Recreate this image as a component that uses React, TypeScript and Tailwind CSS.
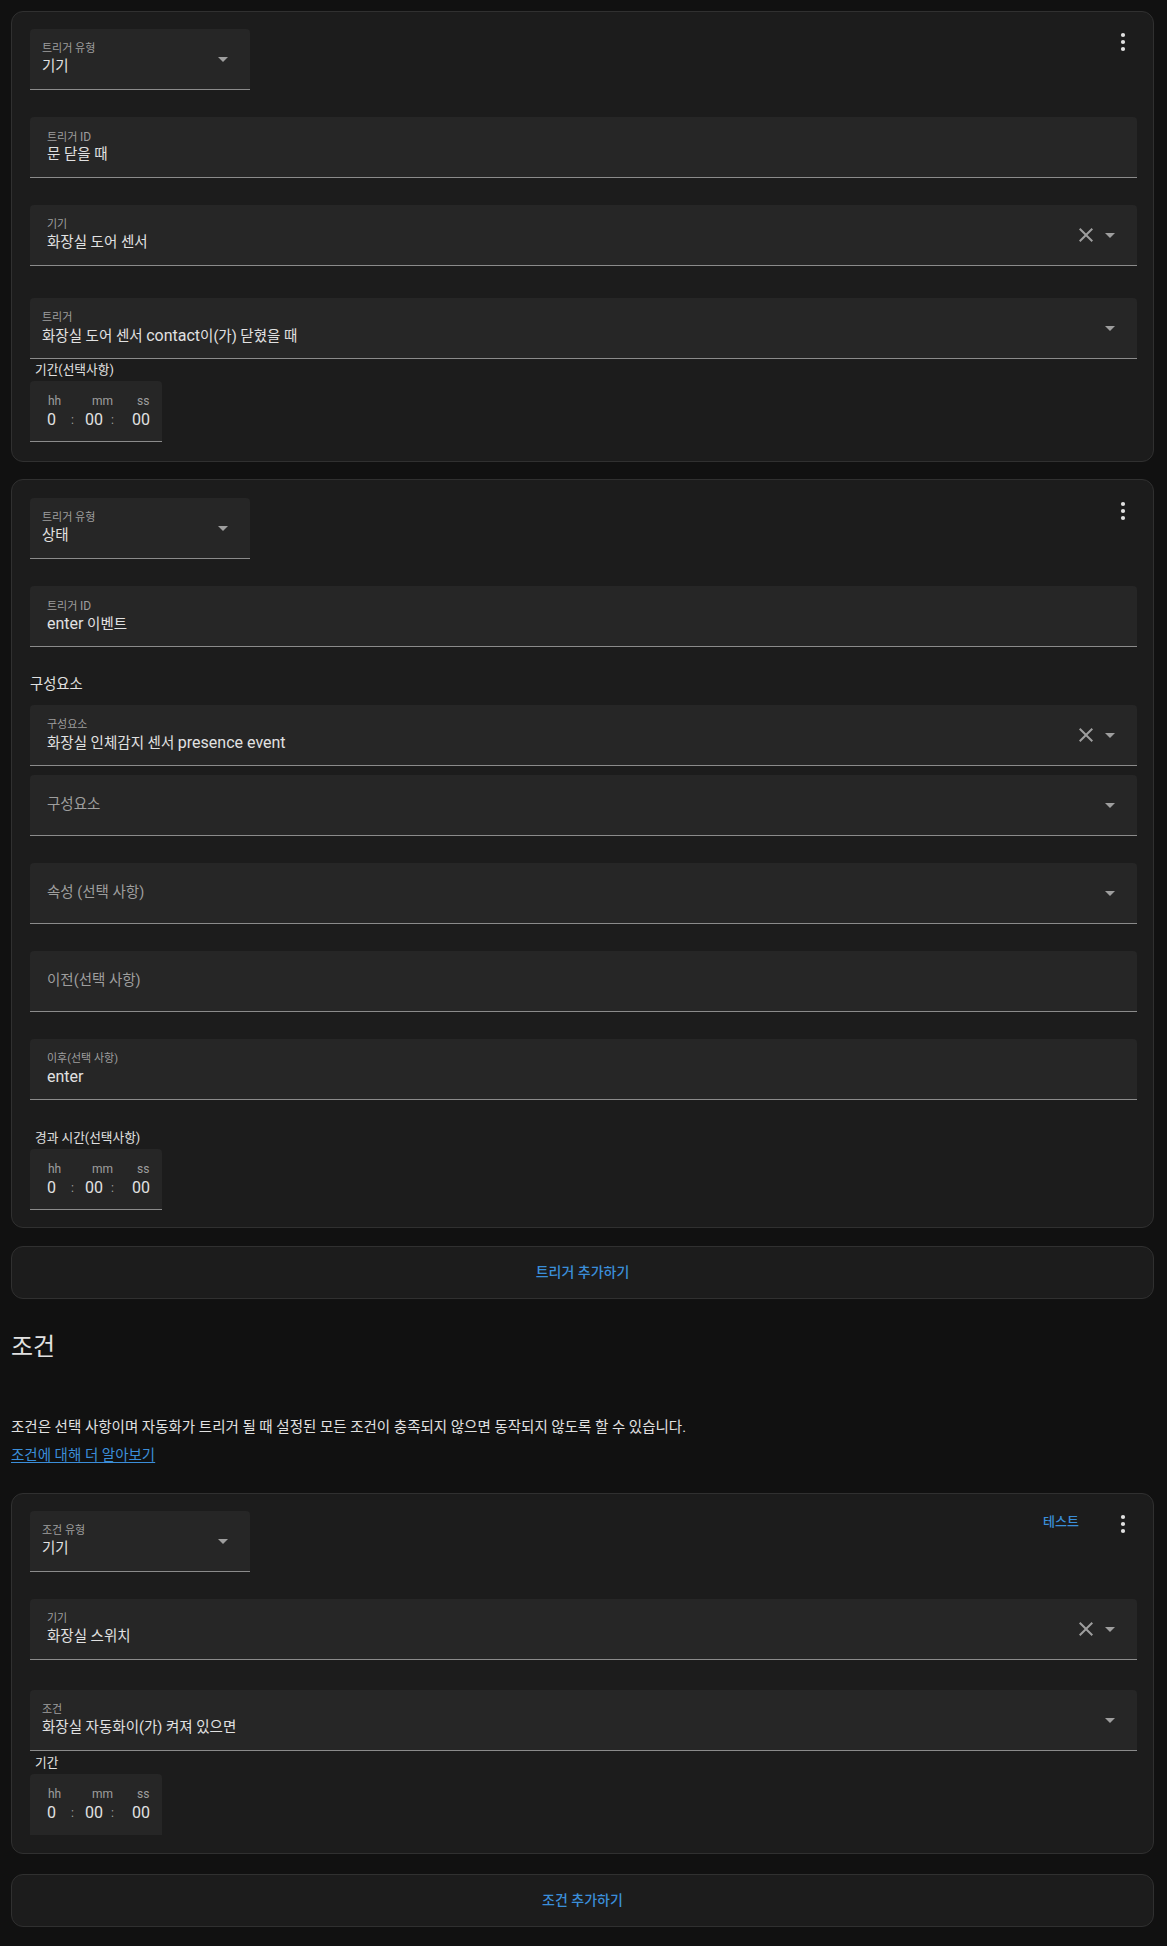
import React from 'react';

const font = "font-[Roboto,'Noto_Sans_CJK_KR',sans-serif]";

// Korean glyphs run wider than the original font, so Korean runs are set a bit smaller
// and Latin words get their nominal size back through these spans
const L12 = ({ children }: { children: React.ReactNode }) => <span className="text-[12px]">{children}</span>;
const L16 = ({ children }: { children: React.ReactNode }) => <span className="text-[16px]">{children}</span>;

const Arrow = () => (
  <svg width="24" height="24" viewBox="0 0 24 24" className="shrink-0">
    <path d="M7,10L12,15L17,10H7Z" fill="#9e9e9e" />
  </svg>
);

const Close = () => (
  <svg width="24" height="24" viewBox="0 0 24 24" className="shrink-0">
    <path
      d="M19,6.41L17.59,5L12,10.59L6.41,5L5,6.41L10.59,12L5,17.59L6.41,19L12,13.41L17.59,19L19,17.59L13.41,12L19,6.41Z"
      fill="#9e9e9e"
    />
  </svg>
);

const Dots = () => (
  <svg width="24" height="24" viewBox="0 0 24 24" className="shrink-0 mt-px mr-[2px]">
    <circle cx="12" cy="5" r="2.1" fill="#e1e1e1" />
    <circle cx="12" cy="12" r="2.1" fill="#e1e1e1" />
    <circle cx="12" cy="19" r="2.1" fill="#e1e1e1" />
  </svg>
);

// filled field with floating label + value
const Field = ({
  label,
  value,
  select,
  clear,
  arrow,
  className = '',
}: {
  label: React.ReactNode;
  value: React.ReactNode;
  select?: boolean;
  clear?: boolean;
  arrow?: boolean;
  className?: string;
}) => (
  <div
    className={`h-[61px] bg-[#262626] rounded-t-[4px] border-b border-[#8b8b8b] flex items-center pr-[15px] ${
      select ? 'pl-[12px]' : 'pl-[17px]'
    } ${className}`}
  >
    <div className="flex-1 min-w-0 self-start pt-[10px]">
      <div className="text-[11px] h-[20px] leading-[20px] text-[#9e9e9e]">{label}</div>
      <div className="text-[14.5px] h-[16px] leading-[16px] text-[#e1e1e1] whitespace-nowrap">{value}</div>
    </div>
    {clear && <Close />}
    {arrow && <Arrow />}
  </div>
);

const Placeholder = ({ text, arrow, className = '' }: { text: string; arrow?: boolean; className?: string }) => (
  <div
    className={`h-[61px] bg-[#262626] rounded-t-[4px] border-b border-[#8b8b8b] flex items-center pl-[17px] pr-[15px] ${className}`}
  >
    <div className="flex-1 text-[14.5px] text-[#9e9e9e]">{text}</div>
    {arrow && <Arrow />}
  </div>
);

const Duration = ({ label, underline = true }: { label: string; underline?: boolean }) => (
  <>
    <div className="h-[22px] leading-[22px] pl-[5px] text-[12.7px] text-[#e1e1e1]">{label}</div>
    <div
      className={`w-[132px] h-[61px] bg-[#262626] rounded-t-[4px] pt-[12px] ${
        underline ? 'border-b border-[#8b8b8b]' : ''
      }`}
    >
      <div className="flex text-[12px] leading-[16px] text-[#9e9e9e]">
        <span className="ml-[18px] w-[13px]">hh</span>
        <span className="ml-[31px] w-[20px]">mm</span>
        <span className="ml-[25px]">ss</span>
      </div>
      <div className="flex mt-px text-[16px] leading-[20px] text-[#e1e1e1]">
        <span className="ml-[17px] w-[23px]">0</span>
        <span className="w-[5px] text-center text-[12px] text-[#9e9e9e]">:</span>
        <span className="ml-[10px] w-[18px]">00</span>
        <span className="ml-[7px] w-[5px] text-center text-[12px] text-[#9e9e9e]">:</span>
        <span className="ml-[17px]">00</span>
      </div>
    </div>
  </>
);

const Card = ({ children, className = '' }: { children: React.ReactNode; className?: string }) => (
  <div className={`bg-[#1c1c1c] border border-[#303030] rounded-[12px] pl-[18px] pr-[16px] ${className}`}>
    {children}
  </div>
);

const AddButton = ({ text, className = '' }: { text: string; className?: string }) => (
  <div
    className={`h-[53px] bg-[#1c1c1c] border border-[#303030] rounded-[12px] flex items-center justify-center text-[14px] font-medium text-[#3b8ed9] ${className}`}
  >
    {text}
  </div>
);

export default function App() {
  return (
    <div className={`min-h-[1946px] bg-[#111111] pl-[11px] pr-[13px] pt-[11px] pb-[19px] ${font}`}>
      {/* trigger: device */}
      <Card className="pt-[17px] pb-[19px]">
        <div className="flex justify-between items-start">
          <Field label="트리거 유형" value="기기" select arrow className="w-[220px]" />
          <Dots />
        </div>
        <Field label={<>트리거 <L12>ID</L12></>} value="문 닫을 때" className="mt-[27px]" />
        <Field label="기기" value="화장실 도어 센서" clear arrow className="mt-[27px]" />
        <Field
          label="트리거"
          value={<>화장실 도어 센서 <L16>contact</L16>이(가) 닫혔을 때</>}
          select
          arrow
          className="mt-[32px]"
        />
        <Duration label="기간(선택사항)" />
      </Card>

      {/* trigger: state */}
      <Card className="mt-[17px] pt-[18px] pb-[17px]">
        <div className="flex justify-between items-start">
          <Field label="트리거 유형" value="상태" select arrow className="w-[220px]" />
          <Dots />
        </div>
        <Field label={<>트리거 <L12>ID</L12></>} value={<><L16>enter</L16> 이벤트</>} className="mt-[27px]" />
        <div className="mt-[27px] h-[20px] leading-[20px] text-[14.3px] text-[#e1e1e1]">구성요소</div>
        <Field
          label="구성요소"
          value={<>화장실 인체감지 센서 <L16>presence event</L16></>}
          clear
          arrow
          className="mt-[11px]"
        />
        <Placeholder text="구성요소" arrow className="mt-[9px]" />
        <Placeholder text="속성 (선택 사항)" arrow className="mt-[27px]" />
        <Placeholder text="이전(선택 사항)" className="mt-[27px]" />
        <Field label="이후(선택 사항)" value={<L16>enter</L16>} className="mt-[27px]" />
        <div className="mt-[27px]">
          <Duration label="경과 시간(선택사항)" />
        </div>
      </Card>

      <AddButton text="트리거 추가하기" className="mt-[18px]" />

      {/* conditions */}
      <h2 className="mt-[32px] text-[24px] leading-[32px] font-normal text-[#e1e1e1]">조건</h2>
      <p className="mt-[51px] text-[14.5px] leading-[28px] text-[#e1e1e1]">
        조건은 선택 사항이며 자동화가 트리거 될 때 설정된 모든 조건이 충족되지 않으면 동작되지 않도록 할 수 있습니다.
      </p>
      <a className="block text-[14.5px] leading-[28px] text-[#3b8ed9] underline underline-offset-2 w-fit">
        조건에 대해 더 알아보기
      </a>

      <Card className="mt-[23px] pt-[17px] pb-[18px]">
        <div className="flex items-start">
          <Field label="조건 유형" value="기기" select arrow className="w-[220px]" />
          <div className="flex-1" />
          <span className="mt-px h-[20px] leading-[20px] text-[13px] font-medium text-[#3b8ed9]">테스트</span>
          <div className="ml-[32px]">
            <Dots />
          </div>
        </div>
        <Field label="기기" value="화장실 스위치" clear arrow className="mt-[27px]" />
        <Field label="조건" value="화장실 자동화이(가) 켜져 있으면" select arrow className="mt-[30px]" />
        <div className="pt-px">
          <Duration label="기간" underline={false} />
        </div>
      </Card>

      <AddButton text="조건 추가하기" className="mt-[20px]" />
    </div>
  );
}
